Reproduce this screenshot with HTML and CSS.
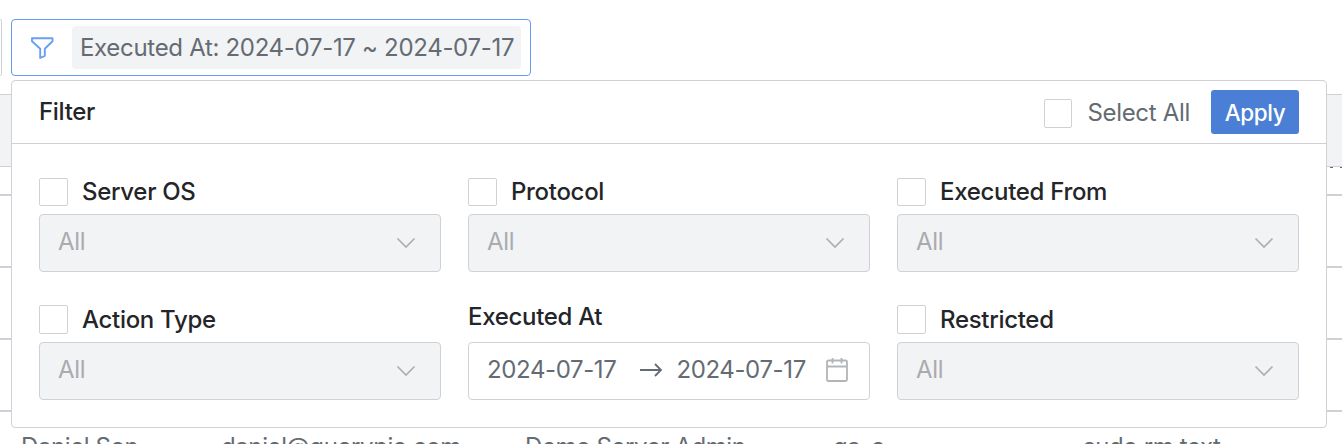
FILE: index.html
```html
<!DOCTYPE html>
<html lang="en">
<head>
<meta charset="utf-8">
<title>Filter</title>
<link rel="stylesheet" href="styles.css">
</head>
<body>
<div class="toolbar">
  <div class="search-box"></div>
  <div class="filter-box">
    <svg class="funnel" viewBox="0 0 24 24"><path d="M2 2.200H22.500V5.200L14.800 12.800V19.800L10.200 22V12.800L2 5.200Z"/></svg>
    <span class="tag">Executed At: 2024-07-17 ~ 2024-07-17</span>
  </div>
</div>
<div class="table">
  <div class="table-head"></div>
  <div class="row short"><i class="mark"></i><i class="mark"></i></div>
  <div class="row"></div>
  <div class="row"></div>
  <div class="row"></div>
  <div class="row last"><span>Daniel Son</span><span>daniel@querypie.com</span><span>Demo Server Admin</span><span>qa-c</span><span>sudo rm text</span></div>
</div>
<div class="panel">
  <div class="panel-head">
    <span class="title">Filter</span>
    <span class="check all-check"></span>
    <span class="select-all">Select All</span>
    <button class="apply">Apply</button>
  </div>
  <div class="fields">
    <div class="field">
      <div class="label"><span class="check"></span>Server OS</div>
      <div class="select">All<svg class="chevron" viewBox="0 0 20 12"><path d="M1.500 1.500L10 10L18.500 1.500"/></svg></div>
    </div>
    <div class="field">
      <div class="label"><span class="check"></span>Protocol</div>
      <div class="select">All<svg class="chevron" viewBox="0 0 20 12"><path d="M1.500 1.500L10 10L18.500 1.500"/></svg></div>
    </div>
    <div class="field">
      <div class="label"><span class="check"></span>Executed From</div>
      <div class="select">All<svg class="chevron" viewBox="0 0 20 12"><path d="M1.500 1.500L10 10L18.500 1.500"/></svg></div>
    </div>
    <div class="field">
      <div class="label"><span class="check low"></span>Action Type</div>
      <div class="select">All<svg class="chevron" viewBox="0 0 20 12"><path d="M1.500 1.500L10 10L18.500 1.500"/></svg></div>
    </div>
    <div class="field">
      <div class="label plain">Executed At</div>
      <div class="select dates">
        <span class="date">2024-07-17</span>
        <svg class="arrow" viewBox="0 0 24 16"><path d="M1 8H22M16 2L22 8L16 14"/></svg>
        <span class="date">2024-07-17</span>
        <svg class="calendar" viewBox="0 0 24 26"><path d="M3.500 3.500H20.500Q22 3.500 22 5V22.500Q22 24 20.500 24H3.500Q2 24 2 22.500V5Q2 3.500 3.500 3.500ZM2 9.500H22M7.500 1V6.500M16.500 1V6.500"/></svg>
      </div>
    </div>
    <div class="field">
      <div class="label"><span class="check low"></span>Restricted</div>
      <div class="select">All<svg class="chevron" viewBox="0 0 20 12"><path d="M1.500 1.500L10 10L18.500 1.500"/></svg></div>
    </div>
  </div>
</div>
</body>
</html>
```
FILE: styles.css
```css
* { box-sizing: border-box; }
body {
  margin: 0;
  height: 444px;
  overflow: hidden;
  position: relative;
  background: #fff;
  color: #646b73;
  font: 24px/30px Inter, sans-serif;
  letter-spacing: -0.31px;
}
svg { fill: none; flex: none; }
.toolbar { display: flex; gap: 9px; padding-top: 19px; height: 94px; }
.search-box {
  width: 2px;
  height: 57px;
  border: 1px solid #d0d1d6;
  border-left: 0;
  border-radius: 0 3px 3px 0;
}
.filter-box {
  display: flex;
  align-items: center;
  width: 520px;
  height: 57px;
  padding-left: 18px;
  border: 1px solid #659bf3;
  border-radius: 4px;
}
.funnel { width: 24px; height: 24px; stroke: #6a9ff5; stroke-width: 1.9; stroke-linejoin: round; }
.tag {
  width: 449px;
  height: 43px;
  margin-left: 18px;
  padding-left: 8px;
  line-height: 43px;
  background: #f2f3f5;
  border-radius: 4px;
  white-space: nowrap;
}
.table-head {
  height: 73px;
  background: #f2f3f5;
  border: solid #d0d1d6;
  border-width: 1px 0;
}
.row { height: 72px; border-bottom: 2px solid #d0d1d6; }
.short { display: flex; justify-content: flex-end; gap: 7px; height: 29px; }
.mark { width: 3px; height: 1px; background: #666970; }
.mark + .mark { width: 2px; }
.last {
  display: grid;
  grid-template-columns: 200px 304px 308px 250px 1fr;
  height: 32px;
  border: 0;
  overflow: hidden;
  padding: 20px 0 0 21px;
  letter-spacing: -0.4px;
  white-space: nowrap;
}
.panel {
  position: absolute;
  left: 11px;
  top: 80px;
  width: 1316px;
  height: 348px;
  background: #fff;
  border: 1px solid #d0d1d6;
  border-radius: 4px;
}
.panel-head {
  display: flex;
  align-items: center;
  height: 63px;
  padding: 0 27px;
  border-bottom: 1px solid #d0d1d6;
}
.title { margin-right: auto; font-weight: 500; color: #242529; }
.check {
  flex: none;
  width: 29px;
  height: 28px;
  border: 1px solid #d0d1d6;
  border-radius: 2px;
  background: #fff;
}
.low { height: 29px; margin-bottom: 1px; }
.all-check { width: 28px; height: 29px; margin-top: 2px; }
.select-all { margin: 2px 21px 0 15px; }
.apply {
  width: 88px;
  height: 44px;
  padding: 1px 0 0;
  border: 0;
  border-radius: 3px;
  background: #4b7fd6;
  color: #fff;
  font: 500 22.5px/43px Inter, sans-serif;
  letter-spacing: -0.45px;
}
.fields {
  display: grid;
  grid-template-columns: repeat(3, 402px);
  column-gap: 27px;
  row-gap: 30px;
  padding: 30px 27px 0;
}
.label {
  display: flex;
  align-items: center;
  gap: 14px;
  height: 36px;
  font-weight: 500;
  color: #242529;
}
.plain { padding-bottom: 7px; }
.field { height: 98px; }
.select {
  display: flex;
  align-items: center;
  height: 58px;
  margin-top: 4px;
  padding: 0 24px 2px 18px;
  border: 1px solid #d0d1d6;
  border-radius: 4px;
  background: #f2f3f5;
  color: #a9abad;
}
.chevron { width: 20px; height: 12px; margin: 1px 0 0 auto; stroke: #adafb1; stroke-width: 1.7; }
.dates { background: #fff; color: #646b73; padding-right: 20px; letter-spacing: -0.38px; }
.arrow { width: 24px; height: 16px; margin: 0 13px 0 23px; stroke: #646b73; stroke-width: 1.8; }
.calendar { width: 24px; height: 26px; margin-left: auto; stroke: #b2b5b8; stroke-width: 1.8; }
```
